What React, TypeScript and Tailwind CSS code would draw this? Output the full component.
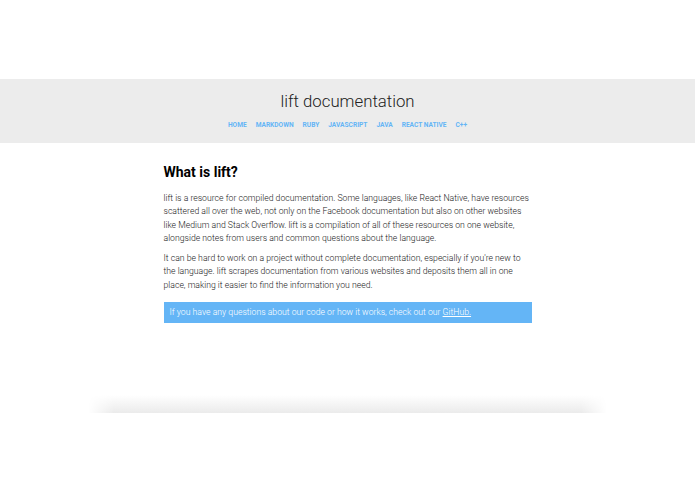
import React from 'react';

const navItems = ['Home', 'Markdown', 'Ruby', 'JavaScript', 'Java', 'React Native', 'C++'];

function App() {
  return (
    <div className="min-h-screen bg-white text-[#333] overflow-hidden" style={{ fontFamily: 'Roboto, "Noto Sans", sans-serif' }}>
      <div className="h-[79px]" />

      {/* Header */}
      <header className="h-[64px] bg-[#ececec] flex flex-col items-center pt-[11px]">
        <h1 className="text-[16.8px] font-light leading-[22px] text-[#222]">lift documentation</h1>
        <nav className="flex gap-[9px] mt-[8px]">
          {navItems.map((item) => (
            <a key={item} href="#" className="text-[6.6px] font-bold uppercase text-[#64b5f6] leading-[10px]">
              {item}
            </a>
          ))}
        </nav>
      </header>

      {/* Content */}
      <main className="w-[368px] mx-auto pt-[20px]">
        <h2 className="text-[14px] font-bold text-black leading-[18px]">What is lift?</h2>
        <p className="mt-[11px] text-[8.68px] leading-[13.3px] font-light text-[#1a1a1a]">
          lift is a resource for compiled documentation. Some languages, like React Native, have resources scattered all
          over the web, not only on the Facebook documentation but also on other websites like Medium and Stack
          Overflow. lift is a compilation of all of these resources on one website, alongside notes from users and
          common questions about the language.
        </p>
        <p className="mt-[7px] text-[8.68px] leading-[13.3px] font-light text-[#1a1a1a]">
          It can be hard to work on a project without complete documentation, especially if you're new to the language.
          lift scrapes documentation from various websites and deposits them all in one place, making it easier to find
          the information you need.
        </p>
        <div className="mt-[10px] h-[21px] bg-[#64b5f6] text-white text-[8.68px] font-light flex items-center px-[6px]">
          If you have any questions about our code or how it works, check out our&nbsp;
          <a href="#" className="underline">GitHub.</a>
        </div>
      </main>

      <div className="h-[72px]" />
      <div className="mx-[88px] h-[18px] bg-gradient-to-b from-white to-[#ebebeb] [mask-image:linear-gradient(to_right,transparent,black_5%,black_95%,transparent)]" />
      <div className="h-[81px]" />
    </div>
  );
}

export default App;
